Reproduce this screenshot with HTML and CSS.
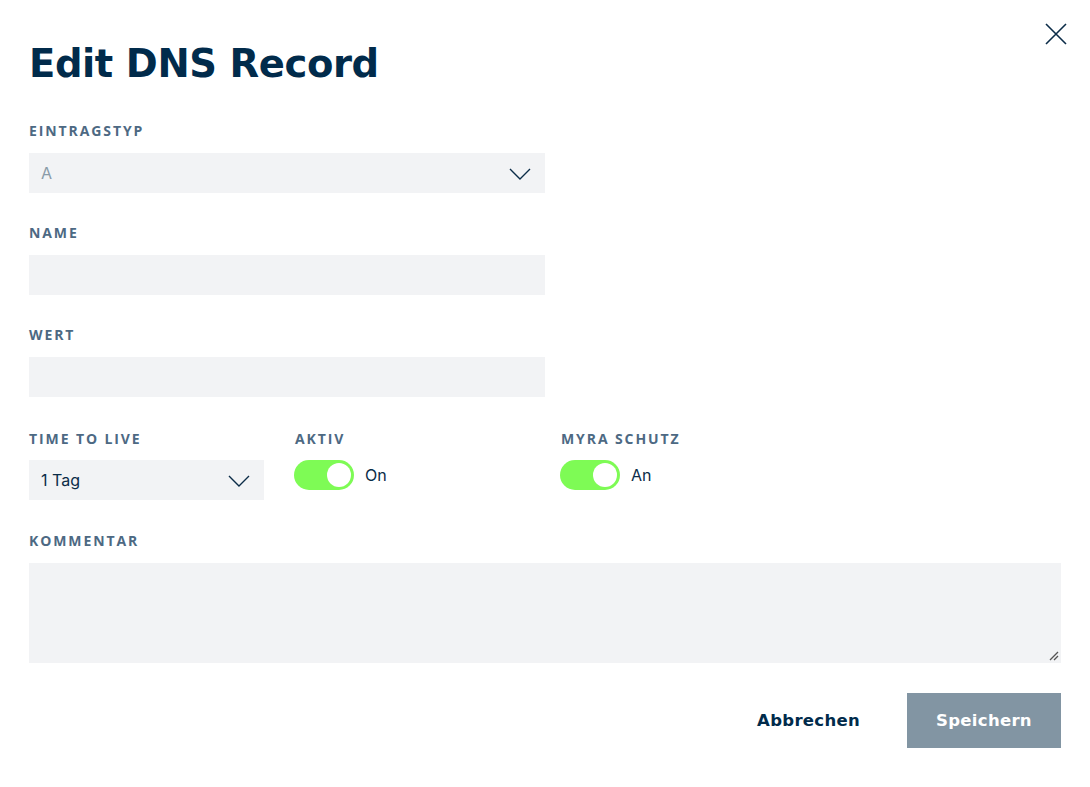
FILE: index.html
```html
<!DOCTYPE html>
<html lang="de">
<head>
    <meta charset="UTF-8">
    <meta name="viewport" content="width=device-width, initial-scale=1.0">
    <title>Edit DNS Record</title>
    <link rel="stylesheet" href="styles.css">
</head>
<body>
    <div class="modal">
        <button class="close" aria-label="Schließen">
            <svg width="24" height="24" viewBox="0 0 24 24"><path d="M2 2 L22 22 M22 2 L2 22" stroke="#0b2c48" stroke-width="1.6" fill="none"/></svg>
        </button>

        <h1>Edit DNS Record</h1>

        <div class="field">
            <label>Eintragstyp</label>
            <div class="select wide disabled">
                <span>A</span>
                <svg class="chevron" width="22" height="12" viewBox="0 0 22 12"><path d="M1 1 L11 11 L21 1" stroke="#0b2c48" stroke-width="1.4" fill="none"/></svg>
            </div>
        </div>

        <div class="field">
            <label>Name</label>
            <div class="input wide"></div>
        </div>

        <div class="field">
            <label>Wert</label>
            <div class="input wide"></div>
        </div>

        <div class="row">
            <div class="field">
                <label>Time to live</label>
                <div class="select">
                    <span>1 Tag</span>
                    <svg class="chevron" width="22" height="12" viewBox="0 0 22 12"><path d="M1 1 L11 11 L21 1" stroke="#0b2c48" stroke-width="1.4" fill="none"/></svg>
                </div>
            </div>
            <div class="field">
                <label>Aktiv</label>
                <div class="toggle-line">
                    <span class="toggle"><span class="knob"></span></span>
                    <span>On</span>
                </div>
            </div>
            <div class="field">
                <label>Myra Schutz</label>
                <div class="toggle-line">
                    <span class="toggle"><span class="knob"></span></span>
                    <span>An</span>
                </div>
            </div>
        </div>

        <div class="field">
            <label>Kommentar</label>
            <div class="textarea">
                <svg class="grip" width="10" height="10" viewBox="0 0 10 10"><path d="M9 1 L1 9 M9 5 L5 9" stroke="#555" stroke-width="1.3"/></svg>
            </div>
        </div>

        <div class="actions">
            <button class="cancel">Abbrechen</button>
            <button class="save">Speichern</button>
        </div>
    </div>
</body>
</html>
```

FILE: styles.css
```css
body {
    margin: 0;
    background: #fff;
    font-family: Inter, "Open Sans", sans-serif;
    color: #0b2c48;
}
.modal {
    position: relative;
    padding: 32px 29px 40px 29px;
}
.close {
    position: absolute;
    top: 22px;
    right: 22px;
    background: none;
    border: 0;
    padding: 0;
    cursor: pointer;
}
h1 {
    font-family: "DejaVu Sans", sans-serif;
    font-weight: bold;
    font-size: 38.5px;
    letter-spacing: -0.4px;
    color: #012b4b;
    margin: 8px 0 35px 0;
    line-height: 48px;
}
.field label {
    display: block;
    font-family: "Open Sans", sans-serif;
    font-size: 14px;
    font-weight: 700;
    letter-spacing: 1.9px;
    text-transform: uppercase;
    color: #4d6983;
    line-height: 16px;
    margin-bottom: 14px;
}
.field {
    margin-bottom: 32px;
}
.input, .select {
    height: 40px;
    background: #f2f3f5;
    box-sizing: border-box;
}
.wide {
    width: 516px;
}
.select {
    display: flex;
    align-items: center;
    justify-content: space-between;
    padding: 0 14px 0 12px;
    font-size: 16px;
    color: #0b2c48;
}
.select.disabled {
    color: #8a9ba8;
}
.chevron {
    margin-top: 2px;
}
.row {
    display: grid;
    grid-template-columns: 235px 235px 235px;
    column-gap: 31px;
    padding-top: 2px;
    margin-bottom: 1px;
}
.row .select {
    margin-top: -1px;
}
.toggle-line {
    display: flex;
    align-items: center;
    gap: 11px;
    font-size: 16px;
    height: 30px;
    margin-left: -1px;
    margin-top: -1px;
}
.toggle {
    width: 60px;
    height: 30px;
    border-radius: 15px;
    background: #7efb55;
    display: flex;
    align-items: center;
    justify-content: flex-end;
    padding-right: 3px;
    box-sizing: border-box;
}
.knob {
    width: 24px;
    height: 24px;
    border-radius: 50%;
    background: #fff;
}
.textarea {
    position: relative;
    height: 100px;
    background: #f2f3f5;
}
.grip {
    position: absolute;
    right: 2px;
    bottom: 2px;
}
.actions {
    display: flex;
    justify-content: flex-end;
    align-items: center;
    gap: 47px;
    margin-top: -2px;
}
.actions button {
    font-family: "DejaVu Sans", sans-serif;
    font-weight: bold;
    font-size: 16.5px;
    letter-spacing: 0.3px;
    border: 0;
    cursor: pointer;
}
.cancel {
    background: none;
    color: #012b4b;
    padding: 0;
}
.save {
    background: #8295a3;
    color: #fff;
    width: 154px;
    height: 55px;
}
```
